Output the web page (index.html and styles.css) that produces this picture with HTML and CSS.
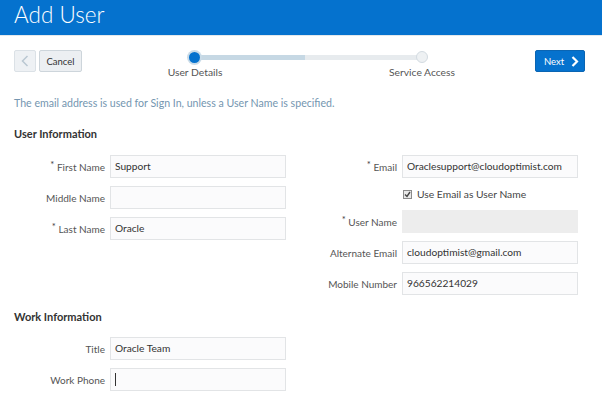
FILE: index.html
```html
<!DOCTYPE html>
<html>
<head>
<meta charset="utf-8">
<link rel="stylesheet" href="styles.css">
</head>
<body>
<header class="header"><h1 class="title">Add User</h1></header>
<div class="toolbar">
  <div class="nav-left">
    <button class="btn-back" aria-label="Back">
      <svg width="8" height="12" viewBox="0 0 8 12"><path d="M6.5 1 L1.5 6 L6.5 11" fill="none" stroke="#b9c7d2" stroke-width="1.5"/></svg>
    </button>
    <button class="btn-cancel">Cancel</button>
  </div>
  <div class="train">
    <div class="train-track">
      <span class="dot dot-active"></span>
      <span class="seg seg-done"></span>
      <span class="seg seg-todo"></span>
      <span class="dot dot-todo"></span>
    </div>
    <div class="train-labels">
      <span class="step-label">User Details</span>
      <span class="step-label">Service Access</span>
    </div>
  </div>
  <button class="btn-next">Next
    <svg width="8" height="11" viewBox="0 0 8 11"><path d="M1.5 1 L6 5.5 L1.5 10" fill="none" stroke="#fff" stroke-width="2.2"/></svg>
  </button>
</div>
<p class="info">The email address is used for Sign In, unless a User Name is specified.</p>

<h2 class="section-title">User Information</h2>
<div class="form">
  <div class="col col-left">
    <label class="lbl"><span class="req">*</span> First Name</label><div class="field">Support</div>
    <label class="lbl">Middle Name</label><div class="field"></div>
    <label class="lbl"><span class="req">*</span> Last Name</label><div class="field">Oracle</div>
  </div>
  <div class="col col-right">
    <label class="lbl"><span class="req">*</span> Email</label><div class="field">Oraclesupport@cloudoptimist.com</div>
    <span></span><div class="check-row"><span class="checkbox"><svg width="7" height="7" viewBox="0 0 7 7"><path d="M1 3.5 L3 5.5 L6 1" fill="none" stroke="#444" stroke-width="1.4"/></svg></span>Use Email as User Name</div>
    <label class="lbl"><span class="req">*</span> User Name</label><div class="field field-disabled"></div>
    <label class="lbl">Alternate Email</label><div class="field">cloudoptimist@gmail.com</div>
    <label class="lbl">Mobile Number</label><div class="field">966562214029</div>
  </div>
</div>

<h2 class="section-title section-work">Work Information</h2>
<div class="form form-work">
  <div class="col col-left">
    <label class="lbl">Title</label><div class="field">Oracle Team</div>
    <label class="lbl">Work Phone</label><div class="field"><span class="caret"></span></div>
  </div>
</div>
</body>
</html>
```
FILE: styles.css
```css
* { box-sizing: border-box; }
body {
  margin: 0;
  background: #fff;
  font-family: Lato, "Open Sans", sans-serif;
  font-size: 10.5px;
  color: #333;
  width: 602px;
  height: 407px;
  overflow: hidden;
}
.header {
  height: 36px;
  background: #0572ce;
  border-bottom: 1px solid #e3e8ec;
  padding-left: 14px;
}
.title {
  margin: 0;
  font-weight: 300;
  font-size: 22.5px;
  line-height: 30px;
  color: #fff;
}
.toolbar {
  display: flex;
  align-items: flex-start;
  margin-top: 14px;
  padding: 0 17px 0 14px;
  height: 30px;
}
.nav-left { display: flex; gap: 3px; }
.btn-back, .btn-cancel {
  height: 22px;
  border: 1px solid #dbe1e6;
  background: #eef1f4;
  border-radius: 2px;
  font-family: inherit;
  padding: 0;
}
.btn-back { width: 22px; display: flex; align-items: center; justify-content: center; }
.btn-cancel { width: 43px; font-size: 9.5px; color: #333; border-color: #cdd5db; background: #eceff2; }
.train { margin-left: 73px; width: 307px; }
.train-track {
  display: flex;
  align-items: center;
  padding: 0 34px;
  height: 12px;
  margin-top: 1px;
}
.dot { width: 12px; height: 12px; border-radius: 50%; flex: none; position: relative; z-index: 1; }
.dot-active { background: #0572ce; box-shadow: 0 0 0 2px #c9dbe8; width: 11px; height: 11px; }
.dot-todo { background: #eef1f3; border: 1px solid #d3dbe1; }
.seg { height: 5px; flex: 1; margin: 0 -3px; }
.seg-done { background: #c6d8e4; }
.seg-todo { background: #e7ebee; }
.train-labels { display: flex; justify-content: space-between; margin-top: 2px; }
.step-label { width: 80px; text-align: center; font-size: 10.3px; color: #555; line-height: 14px; white-space: nowrap; }
.btn-next {
  margin-left: auto;
  width: 50px;
  height: 22px;
  background: #0572ce;
  border: 1px solid #0a65b3;
  border-radius: 2px;
  color: #fff;
  font-family: inherit;
  font-size: 9.5px;
  display: flex;
  align-items: center;
  justify-content: center;
  gap: 7px;
  padding: 0 0 0 3px;
}
.info {
  margin: 16px 0 0 14px;
  line-height: 14px;
  font-size: 10.6px;
  color: #7496b0;
}
.section-title {
  margin: 17px 0 0 14px;
  font-size: 11px;
  font-weight: 700;
  line-height: 14px;
  color: #333;
}
.section-work { margin-top: 15px; }
.form {
  display: flex;
  gap: 11px;
  margin: 14px 0 0 14px;
  align-items: flex-start;
}
.form-work { margin-top: 13px; }
.col {
  display: grid;
  column-gap: 5px;
  row-gap: 8px;
  align-items: center;
}
.col-left { grid-template-columns: 91px 176px; }
.col-right { grid-template-columns: 100px 176px; }
.lbl {
  text-align: right;
  color: #555;
  font-size: 10px;
  white-space: nowrap;
}
.req { font-size: 9.5px; position: relative; top: -3px; color: #444; }
.field {
  height: 23px;
  border: 1px solid #e2e4e6;
  background: #fbfbfc;
  padding: 0 4px;
  line-height: 21px;
  font-size: 10.2px;
  color: #333;
  white-space: nowrap;
  overflow: hidden;
}
.field-disabled { background: #ededed; border-color: #ededed; }
.check-row {
  height: 16px;
  display: flex;
  align-items: center;
  gap: 5px;
  font-size: 10.3px;
  color: #444;
  padding-left: 1px;
}
.checkbox {
  width: 9px; height: 9px;
  border: 1px solid #8a8a8a;
  background: #e8e8e8;
  display: flex; align-items: center; justify-content: center;
}
.caret { display: inline-block; width: 1px; height: 13px; background: #333; vertical-align: middle; margin-top: -2px; }
```
